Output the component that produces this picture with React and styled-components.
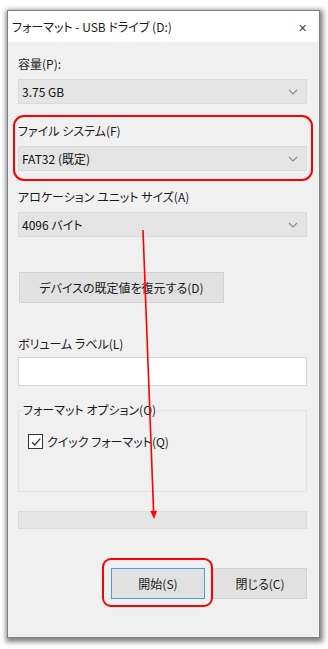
import * as React from 'react';
import styled, { createGlobalStyle } from 'styled-components';

const GlobalStyle = createGlobalStyle`
  html, body {
    margin: 0;
    padding: 0;
    background: #ffffff;
  }
  body {
    font-family: "Noto Sans CJK JP", "Noto Sans", sans-serif;
    font-size: 12px;
    font-feature-settings: "palt";
    color: #1a1a1a;
  }
`;

const Chevron = () => (
  <svg width="10" height="6" viewBox="0 0 10 6">
    <path d="M1 1 L5 5 L9 1" fill="none" stroke="#8c8c8c" strokeWidth="1.1" />
  </svg>
);

const Check = () => (
  <svg width="12" height="12" viewBox="0 0 12 12">
    <path d="M2 6.2 L4.8 9 L10.2 2.6" fill="none" stroke="#333" strokeWidth="1.3" />
  </svg>
);

const Combo = ({ value }) => (
  <Select>
    <span>{value}</span>
    <Chevron />
  </Select>
);

const App = () => {
  return (
    <Page>
      <GlobalStyle />
      <Window>
        <TitleBar>
          <Title>フォーマット - USB ドライブ (D:)</Title>
          <Close>✕</Close>
        </TitleBar>
        <Body>
          <Label $top={14}>容量(P):</Label>
          <Combo value="3.75 GB" />

          <Label $top={19}>ファイル システム(F)</Label>
          <Combo value="FAT32 (既定)" />

          <Label $top={18}>アロケーション ユニット サイズ(A)</Label>
          <Combo value="4096 バイト" />

          <RestoreButton>デバイスの既定値を復元する(D)</RestoreButton>

          <Label $top={33}>ボリューム ラベル(L)</Label>
          <TextBox />

          <GroupBox>
            <Legend>フォーマット オプション(O)</Legend>
            <CheckRow>
              <CheckBox><Check /></CheckBox>
              <span>クイック フォーマット(Q)</span>
            </CheckRow>
          </GroupBox>

          <Progress />

          <ButtonRow>
            <DialogButton $primary>開始(S)</DialogButton>
            <DialogButton>閉じる(C)</DialogButton>
          </ButtonRow>
        </Body>
      </Window>

      <Highlight $x={13} $y={115} $w={300} $h={66} $r={11} />
      <Highlight $x={102} $y={558} $w={111} $h={49} $r={9} />
      <Arrow width="328" height="649" viewBox="0 0 328 649">
        <line x1="143" y1="230" x2="153.6" y2="512" stroke="#ff0000" strokeWidth="1.6" />
        <path d="M150.4 511 L157 510.8 L154 519 Z" fill="#ff0000" />
      </Arrow>
    </Page>
  );
};

export default App;

/* STYLED COMPONENTS */
const Page = styled.div`
  position: relative;
  width: 328px;
  height: 649px;
  padding: 10px 0 0 7px;
  box-sizing: border-box;
`;

const Window = styled.div`
  width: 313px;
  height: 628px;
  box-sizing: border-box;
  background: #f0f0f0;
  border: 1px solid #808080;
  box-shadow: 1px 2px 5px 2px rgba(0, 0, 0, 0.5);
  display: flex;
  flex-direction: column;
`;

const TitleBar = styled.div`
  height: 31px;
  background: #ffffff;
  display: flex;
  align-items: center;
  justify-content: space-between;
  padding: 0 12px 0 4px;
  flex-shrink: 0;
`;

const Title = styled.span`
  font-size: 12px;
  color: #1a1a1a;
  padding-bottom: 1px;
`;

const Close = styled.span`
  font-size: 11px;
  color: #444;
`;

const Body = styled.div`
  flex: 1;
  display: flex;
  flex-direction: column;
  padding: 0 12px 0 10px;
`;

const Label = styled.div`
  height: 16px;
  line-height: 16px;
  margin-top: ${(p) => p.$top}px;
  margin-bottom: 7px;
  font-size: 12px;
`;

const Select = styled.div`
  height: 25px;
  box-sizing: border-box;
  background: #e4e4e4;
  border: 1px solid #dadada;
  display: flex;
  align-items: center;
  justify-content: space-between;
  padding: 0 8px 0 3px;
  font-size: 12px;
  color: #111;
`;

const RestoreButton = styled.div`
  margin-top: 35px;
  width: 205px;
  height: 31px;
  margin-left: 1px;
  box-sizing: border-box;
  background: #e1e1e1;
  border: 1px solid #d2d2d2;
  display: flex;
  align-items: center;
  justify-content: center;
  font-size: 12px;
`;

const TextBox = styled.div`
  height: 29px;
  box-sizing: border-box;
  background: #ffffff;
  border: 1px solid #d4d4d4;
  margin-top: -2px;
`;

const GroupBox = styled.div`
  position: relative;
  margin-top: 24px;
  height: 82px;
  box-sizing: border-box;
  border: 1px solid #e2e2e2;
  padding: 22px 0 0 9px;
`;

const Legend = styled.span`
  position: absolute;
  top: -9px;
  left: 3px;
  padding: 0 1px;
  background: #f0f0f0;
  line-height: 16px;
  font-size: 12px;
`;

const CheckRow = styled.div`
  display: flex;
  align-items: center;
  gap: 4px;
  font-size: 12px;
`;

const CheckBox = styled.div`
  width: 15px;
  height: 15px;
  box-sizing: border-box;
  border: 1px solid #333;
  background: #ffffff;
  display: flex;
  align-items: center;
  justify-content: center;
`;

const Progress = styled.div`
  margin-top: 19px;
  height: 18px;
  box-sizing: border-box;
  background: #e6e6e6;
  border: 1px solid #dcdcdc;
`;

const ButtonRow = styled.div`
  margin-top: 39px;
  display: flex;
  justify-content: flex-end;
  gap: 8px;
`;

const DialogButton = styled.div`
  width: 94px;
  height: 31px;
  box-sizing: border-box;
  background: #e1e1e1;
  border: 1px solid ${(p) => (p.$primary ? '#4a9ee0' : '#d2d2d2')};
  display: flex;
  align-items: center;
  justify-content: center;
  font-size: 12px;
`;

const Highlight = styled.div`
  position: absolute;
  left: ${(p) => p.$x}px;
  top: ${(p) => p.$y}px;
  width: ${(p) => p.$w}px;
  height: ${(p) => p.$h}px;
  box-sizing: border-box;
  border: 2px solid #ff0000;
  border-radius: ${(p) => p.$r}px;
  pointer-events: none;
`;

const Arrow = styled.svg`
  position: absolute;
  left: 0;
  top: 0;
  pointer-events: none;
`;
